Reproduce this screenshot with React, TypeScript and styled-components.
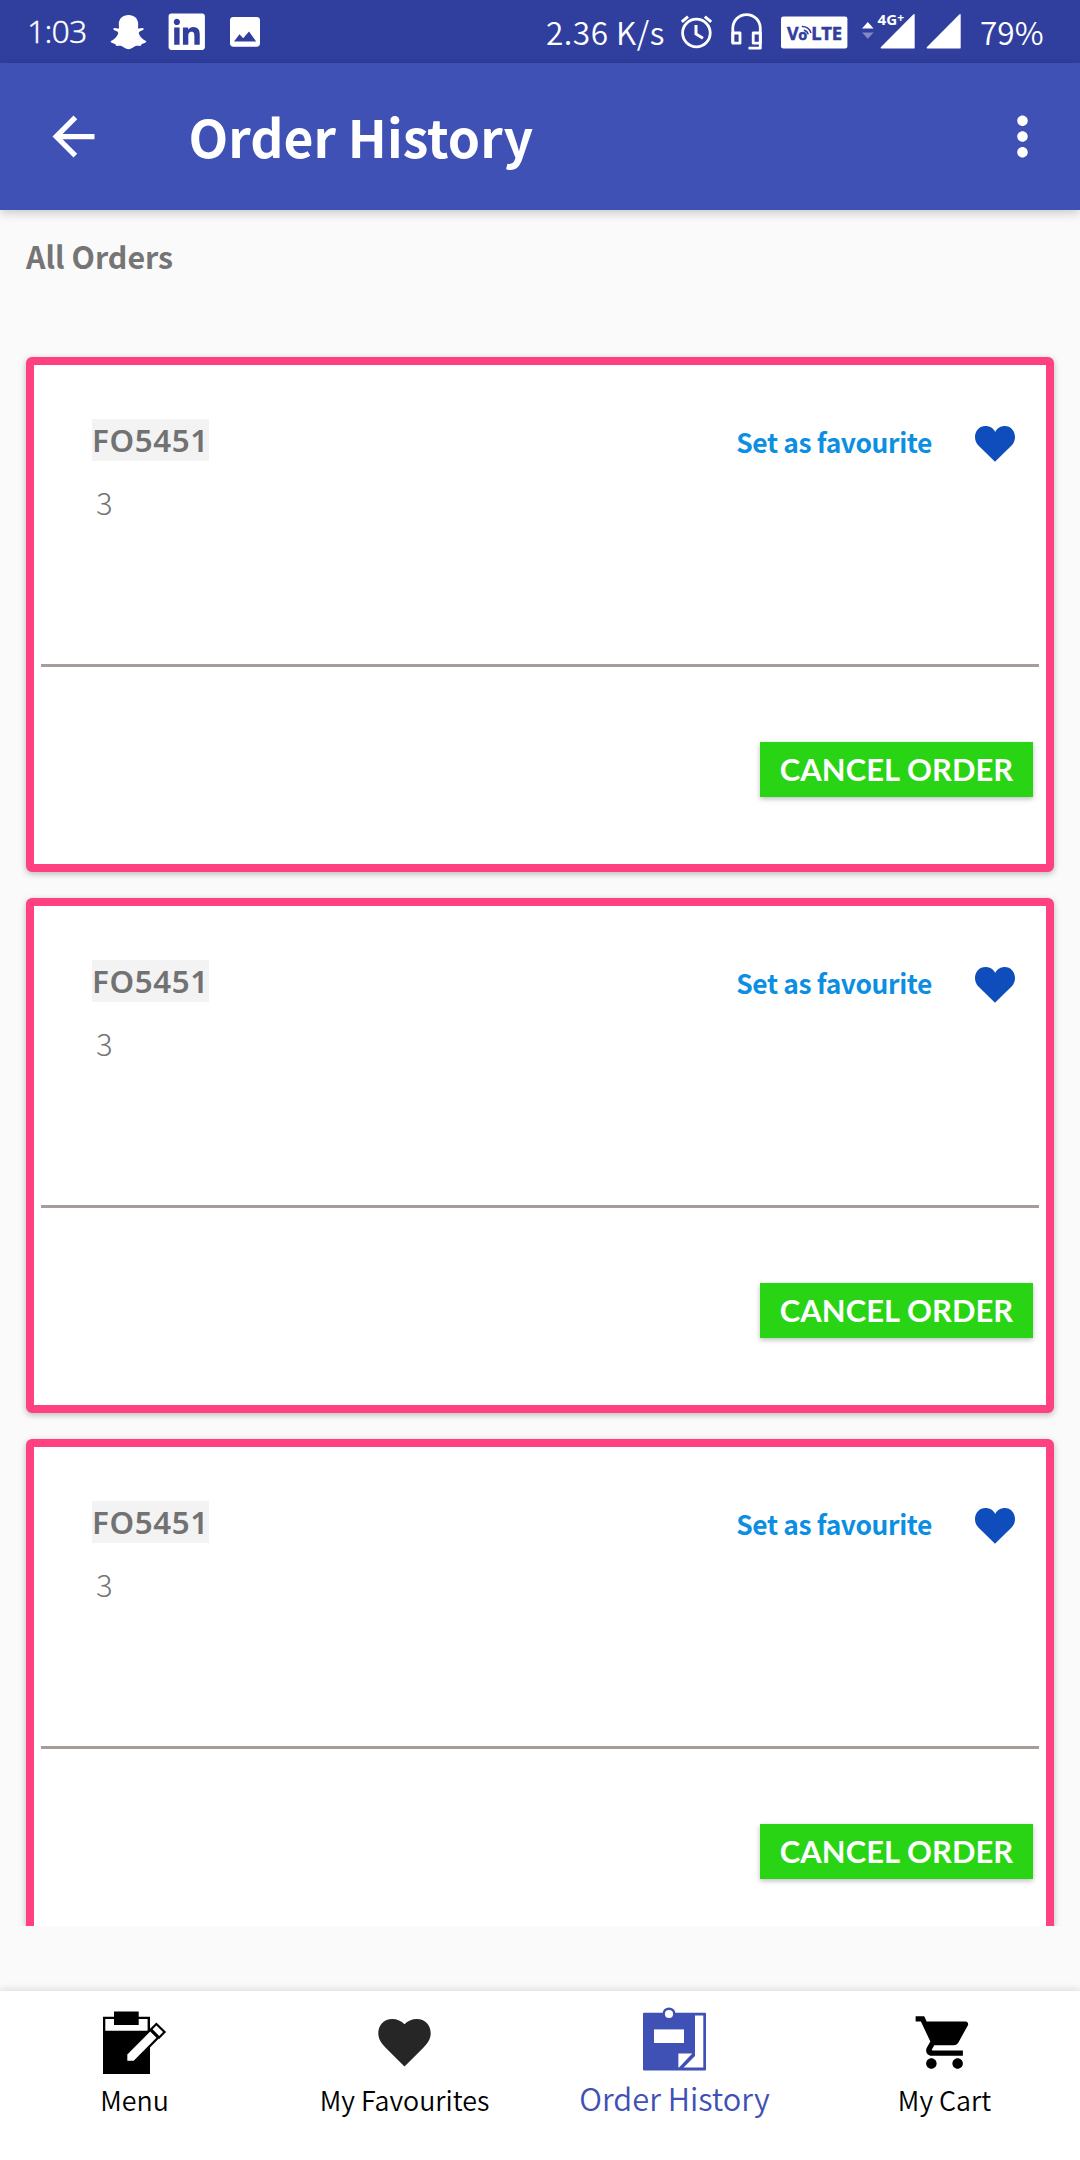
import React from "react";
import styled, { createGlobalStyle } from "styled-components";
import { MdArrowBack, MdMoreVert, MdShoppingCart } from "react-icons/md";
import { FaLinkedin } from "react-icons/fa";

const latin = `"Noto Sans CJK SC", "Noto Sans", sans-serif`;
const digits = `"Noto Sans", "Open Sans", sans-serif`;

const GlobalStyle = createGlobalStyle`
  html, body { margin: 0; padding: 0; background: #fafafa; }
  * { box-sizing: border-box; }
  svg { display: block; flex: none; overflow: visible; }
`;

const Screen = styled.div`
  width: 1080px;
  height: 2160px;
  display: flex;
  flex-direction: column;
  overflow: hidden;
  background: #fafafa;
  font-family: ${latin};
`;

/* ---------- status bar ---------- */

const StatusBar = styled.header`
  flex: none;
  height: 63px;
  display: flex;
  justify-content: space-between;
  padding: 0 38px 0 27px;
  background: #303e9e;
  color: #fff;
`;

const StatusGroup = styled.div`
  display: flex;
  align-items: center;
`;

const StatusText = styled.span`
  padding-bottom: 2px;
  font-size: 31.6px;
  font-weight: 350;
  line-height: 40px;
  white-space: nowrap;
`;

const Clock = styled(StatusText)`
  width: 65px;
  padding-bottom: 1px;
  font-family: ${digits};
  font-size: 32px;
  font-weight: 300;
  letter-spacing: -0.8px;
  -webkit-text-stroke: 0.3px #fff;
`;

const NetworkSpeed = styled(StatusText)`
  width: 135px;
  letter-spacing: 0.5px;
`;

const BatteryLevel = styled(StatusText)`
  width: 62px;
  margin-left: 19px;
`;

const StatusIcon = styled.svg<{ $gap: number }>`
  margin-left: ${(p) => p.$gap}px;
`;

const LinkedInIcon = styled(FaLinkedin)`
  margin-left: 18.5px;
`;

const BadgeText = styled.text`
  font-family: "Noto Sans", sans-serif;
  font-weight: 700;
`;

const Snapchat = () => (
  <StatusIcon $gap={18} width={37} height={63} viewBox="110.5 0 37 63" fill="#fff">
    <path d="M129 15C134.8 15 138.7 18.8 138.7 24L138.5 28.3C140 29 142 27.6 143.3 28C144.8 28.6 144.3 29.8 142.5 30.5C140.5 31.3 139 32 139.3 33.5C140.5 37 143.5 39.8 146.5 41C147.4 41.6 146.5 42.8 144 43.4C142 43.9 141.8 44.3 141.5 45.6C141 46.4 138.5 45.4 136 46C133.5 47 132 49.2 129 49.2C126 49.2 124.5 47 122 46C119.5 45.4 117 46.4 116.5 45.6C116.2 44.3 116 43.9 114 43.4C111.5 42.8 110.6 41.6 111.5 41C114.5 39.8 117.5 37 118.7 33.5C119 32 117.5 31.3 115.5 30.5C113.7 29.8 113.2 28.6 114.7 28C116 27.6 118 29 119.5 28.3L119.3 24C119.3 18.8 123.2 15 129 15Z" />
  </StatusIcon>
);

const Picture = () => (
  <StatusIcon $gap={23} width={30} height={63} viewBox="230 0 30 63">
    <rect x="230" y="17" width="30" height="29.7" rx="3.4" fill="#fff" />
    <path d="M234 41.4L239.5 34.2L243.2 38.2L249 31.6L256.2 41.4Z" fill="#303e9e" />
  </StatusIcon>
);

const Alarm = () => (
  <StatusIcon $gap={0} width={31} height={63} viewBox="681 0 31 63" fill="none" stroke="#fff" strokeWidth={2.8}>
    <circle cx="696.4" cy="33" r="13.8" />
    <path d="M696 25V34L703 38.2M681.8 21.8L688 16.6M704.8 16.6L711.2 21.8" strokeWidth={3} />
  </StatusIcon>
);

const Headset = () => (
  <StatusIcon $gap={19} width={31} height={63} viewBox="731 0 31 63" fill="none" stroke="#fff" strokeWidth={2.8} strokeLinejoin="round">
    <path d="M732.8 43V28.3A13.7 13.7 0 0 1 760.3 28.3V48.2H748.5" />
    <path d="M732.8 33H740V43.2H732.8ZM760.3 33H753.2V43.2H760.3Z" />
  </StatusIcon>
);

const VoLte = () => (
  <StatusIcon $gap={19} width={66} height={63} viewBox="781 0 66 63">
    <rect x="781" y="16.4" width="66.4" height="32.2" rx="2.4" fill="#fff" />
    <g fill="#303e9e" stroke="#303e9e" strokeWidth={0.5}>
      <BadgeText x="787" y="40" fontSize="18.6" textLength="11.6" lengthAdjust="spacingAndGlyphs">V</BadgeText>
      <BadgeText x="798.2" y="40" fontSize="14.5" textLength="9" lengthAdjust="spacingAndGlyphs">o</BadgeText>
      <BadgeText x="811.2" y="40" fontSize="18.6" textLength="31" lengthAdjust="spacingAndGlyphs">LTE</BadgeText>
    </g>
    <g fill="none" stroke="#303e9e" strokeWidth={1.5}>
      <path d="M803.8 30.2A5.5 5.5 0 0 1 808.2 34.4" />
      <path d="M801.8 26.6A9.5 9.5 0 0 1 811 33" />
    </g>
  </StatusIcon>
);

const Signals = () => (
  <StatusIcon $gap={15} width={99} height={63} viewBox="862 0 99 63" fill="#fff">
    <path d="M862 28.4L867.8 22L873.6 28.4Z" />
    <path d="M862 32.4H873.6L867.8 38.8Z" opacity={0.4} />
    <path d="M881 47L913.5 14.2Q914.7 13.4 914.7 15V47.4Q914.7 48.6 913.5 48.6H881.3Q879.8 48.4 881 47Z" />
    <path d="M927 47L959.5 14.2Q960.7 13.4 960.7 15V47.4Q960.7 48.6 959.5 48.6H927.3Q925.8 48.4 927 47Z" />
    <BadgeText x="877.6" y="24.8" fontSize="14.4" textLength="19.6" lengthAdjust="spacingAndGlyphs">4G</BadgeText>
    <BadgeText x="897.2" y="21.8" fontSize="12">+</BadgeText>
  </StatusIcon>
);

/* ---------- app bar ---------- */

const AppBar = styled.div`
  flex: none;
  position: relative;
  z-index: 1;
  height: 147px;
  display: flex;
  align-items: center;
  padding: 0 26px 0 42px;
  background: #3f51b5;
  color: #fff;
  box-shadow: 0 3px 10px rgba(0, 0, 0, 0.2);
`;

const Title = styled.h1`
  flex: 1;
  margin: 0 0 0 83.5px;
  font-size: 51.6px;
  font-weight: 700;
  line-height: 80px;
  letter-spacing: 0.05px;
  padding-bottom: 2px;
`;

/* ---------- orders ---------- */

const SectionTitle = styled.h2`
  flex: none;
  margin: 26px 26px 0;
  height: 40px;
  font-size: 30.4px;
  font-weight: 700;
  line-height: 41px;
  color: #757575;
`;

const OrderList = styled.main`
  flex: none;
  height: 1650px;
  overflow: hidden;
  display: flex;
  flex-direction: column;
  gap: 26px;
  padding: 81px 26px 0;
`;

const Card = styled.article`
  flex: none;
  height: 515px;
  border: 8px solid #ff4081;
  border-radius: 6px;
  background: linear-gradient(#fff, #fff) padding-box, #ff4081 border-box;
  box-shadow: 0 2px 6px rgba(0, 0, 0, 0.26);
`;

const CardTop = styled.div`
  height: 299px;
  padding: 54px 31px 0 58px;
`;

const CardHeader = styled.div`
  display: flex;
  align-items: flex-start;
`;

const OrderCode = styled.strong`
  width: 117px;
  height: 42px;
  margin-right: auto;
  background: #f3f3f3;
  color: #727272;
  font-family: ${digits};
  font-size: 31.3px;
  font-weight: 600;
  line-height: 42px;
  letter-spacing: 0.6px;
  white-space: nowrap;
`;

const FavouriteLabel = styled.span`
  margin: 5px 43px 0 0;
  color: #0c8fe2;
  font-size: 26.4px;
  font-weight: 700;
  line-height: 36px;
  letter-spacing: -0.38px;
`;

const CardHeart = styled.svg`
  margin-top: 7px;
`;

const Quantity = styled.p`
  margin: 19px 0 0 4px;
  color: #757575;
  font-size: 31px;
  font-weight: 300;
  line-height: 42px;
`;

const Divider = styled.hr`
  height: 3px;
  margin: 0 7px;
  border: 0;
  background: #a89c9a;
`;

const CardActions = styled.div`
  display: flex;
  justify-content: flex-end;
  padding: 75px 13px 0;
`;

const CancelButton = styled.button`
  width: 273px;
  height: 55px;
  padding: 0;
  border: 0;
  background: #29d415;
  color: #fff;
  font-family: Lato, sans-serif;
  font-size: 30.9px;
  font-weight: 700;
  line-height: 55px;
  letter-spacing: 0.1px;
  text-align: center;
  white-space: nowrap;
  box-shadow: 0 2px 5px rgba(0, 0, 0, 0.26);
`;

const OrderCard = ({ code, quantity }: { code: string; quantity: number }) => (
  <Card>
    <CardTop>
      <CardHeader>
        <OrderCode>{code}</OrderCode>
        <FavouriteLabel>Set as favourite</FavouriteLabel>
        <CardHeart width={40} height={36} viewBox="0 0 40 36" fill="#0f4dbc">
          <path d="M20 35.8L3.4 19.6C1.2 17 0 14.4 0 11C0 4.8 4.6 0 10.4 0C14.6 0 18.4 2 20.2 6C22 2 26 0 29.8 0C35.6 0 40 4.8 40 11C40 14.4 38.8 17 36.6 19.6Z" />
        </CardHeart>
      </CardHeader>
      <Quantity>{quantity}</Quantity>
    </CardTop>
    <Divider />
    <CardActions>
      <CancelButton>CANCEL ORDER</CancelButton>
    </CardActions>
  </Card>
);

/* ---------- bottom navigation ---------- */

const BottomNav = styled.nav`
  flex: none;
  height: 169px;
  margin-top: auto;
  display: grid;
  grid-template-columns: repeat(4, 1fr);
  background: #fff;
  box-shadow: 0 -1px 8px rgba(0, 0, 0, 0.14);
`;

const NavItem = styled.div<{ $active?: boolean }>`
  display: flex;
  flex-direction: column;
  align-items: center;
  gap: ${(p) => (p.$active ? 9 : 8)}px;
  padding: ${(p) => (p.$active ? 17 : 20)}px 1px 0 0;
  color: ${(p) => (p.$active ? "#3f51b5" : "#000")};
  font-size: ${(p) => (p.$active ? 30.8 : 26.8)}px;
  font-weight: 350;
  line-height: 36px;
`;

const MenuIcon = () => (
  <svg width={63} height={63} viewBox="103 2010.5 63 63">
    <path d="M103 2016.3H150V2073.5H103Z" />
    <path d="M105.3 2018.5H147.6V2030.3H105.3Z" fill="#fff" />
    <path d="M114 2011H138.7V2024.5H114Z" />
    <g fill="#fff" stroke="#000" strokeWidth={4.4} paintOrder="stroke">
      <path d="M127.3 2054L150.2 2031L156.5 2037.3L133.7 2060.3H127.3Z" />
      <path d="M152.6 2028.8L156.4 2025L163 2031.6L159.2 2035.4Z" />
    </g>
  </svg>
);

const HeartIcon = () => (
  <svg width={63} height={63} viewBox="373.1 2010.5 63 63" fill="#262626">
    <path d="M404.6 2066L386 2047.5C381 2042 378.4 2038.5 378.4 2032.5C378.4 2024.5 384.4 2018.4 392.2 2018.4C397.2 2018.4 401.5 2020.4 404.6 2023.8C407.7 2020.4 412 2018.4 417 2018.4C424.8 2018.4 430.8 2024.5 430.8 2032.5C430.8 2038.5 428.2 2042 423.2 2047.5Z" />
  </svg>
);

const HistoryIcon = () => (
  <svg width={63} height={63} viewBox="643 2007 63 63" fill="#3f51b5">
    <rect x="643" y="2011.8" width="63" height="57.6" rx="1" />
    <circle cx="669" cy="2013" r="6.6" />
    <g fill="#fff">
      <circle cx="669" cy="2013" r="4.1" />
      <path d="M654 2028.4H684V2042H654Z" />
      <path d="M695 2014.4H703.3V2066.6H683.6L695 2055Z" />
      <path d="M678.4 2052.6H692.2L679 2066.6H678.4Z" />
    </g>
  </svg>
);

export default function App() {
  const orders = [1, 2, 3];
  return (
    <Screen>
      <GlobalStyle />
      <StatusBar>
        <StatusGroup>
          <Clock>1:03</Clock>
          <Snapchat />
          <LinkedInIcon size={41.5} />
          <Picture />
        </StatusGroup>
        <StatusGroup>
          <NetworkSpeed>2.36 K/s</NetworkSpeed>
          <Alarm />
          <Headset />
          <VoLte />
          <Signals />
          <BatteryLevel>79%</BatteryLevel>
        </StatusGroup>
      </StatusBar>
      <AppBar>
        <MdArrowBack size={63} />
        <Title>Order History</Title>
        <MdMoreVert size={63} />
      </AppBar>
      <SectionTitle>All Orders</SectionTitle>
      <OrderList>
        {orders.map((id) => (
          <OrderCard key={id} code="FO5451" quantity={3} />
        ))}
      </OrderList>
      <BottomNav>
        <NavItem>
          <MenuIcon />
          Menu
        </NavItem>
        <NavItem>
          <HeartIcon />
          My Favourites
        </NavItem>
        <NavItem $active>
          <HistoryIcon />
          Order History
        </NavItem>
        <NavItem>
          <MdShoppingCart size={63} />
          My Cart
        </NavItem>
      </BottomNav>
    </Screen>
  );
}
